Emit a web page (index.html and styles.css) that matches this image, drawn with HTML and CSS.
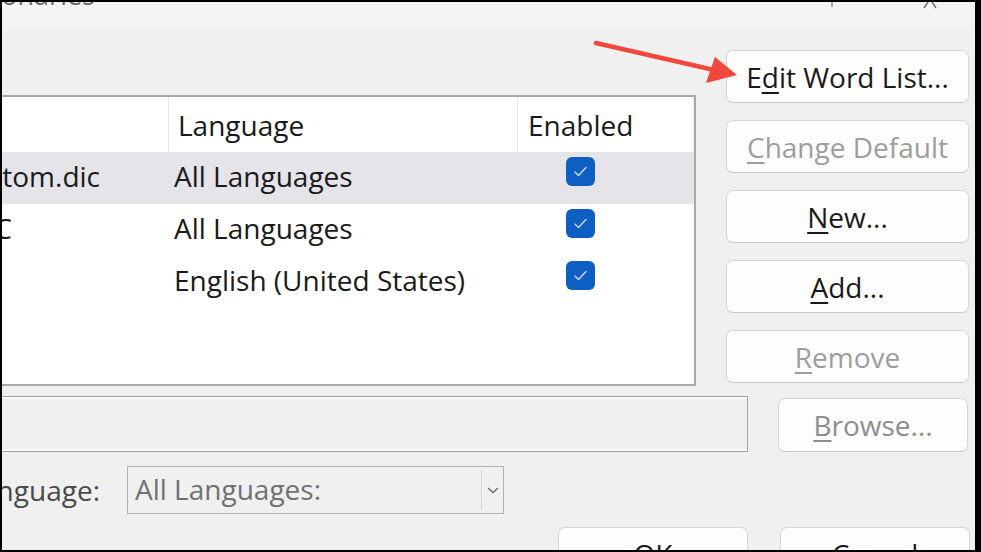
FILE: index.html
```html
<!DOCTYPE html>
<html lang="en">
<head>
<meta charset="utf-8">
<title>Custom Dictionaries</title>
<link rel="stylesheet" href="styles.css">
</head>
<body>
<div class="dialog">
  <div class="titlebar">
    <span class="title">Custom Dictionaries</span>
    <svg class="cap-max" width="4" height="6" viewBox="0 0 4 6"><line x1="1" y1="0" x2="1" y2="5" stroke="#7a7a7a" stroke-width="1.2"/></svg>
    <svg class="cap-close" width="14" height="7" viewBox="0 0 14 7"><path d="M1 6 L5 0 M13 6 L9 0" stroke="#6a6a6a" stroke-width="1.4" fill="none"/></svg>
  </div>
  <div class="content">
    <div class="top-row">
      <div class="list">
        <div class="list-head">
          <div class="cell c1"></div>
          <div class="cell c2 head">Language</div>
          <div class="cell c3 head">Enabled</div>
        </div>
        <div class="list-row selected">
          <div class="cell c1"><span class="clip r1">Custom.dic</span></div>
          <div class="cell c2">All Languages</div>
          <div class="cell c3"><span class="check"><svg width="29" height="29" viewBox="0 0 29 29"><path d="M9 15 L12.5 18.5 L20 10.5" stroke="#d6e4f6" stroke-width="1.2" fill="none" stroke-linecap="round" stroke-linejoin="round"/></svg></span></div>
        </div>
        <div class="list-row">
          <div class="cell c1"><span class="clip r2">RoamingCustom.DIC</span></div>
          <div class="cell c2">All Languages</div>
          <div class="cell c3"><span class="check"><svg width="29" height="29" viewBox="0 0 29 29"><path d="M9 15 L12.5 18.5 L20 10.5" stroke="#d6e4f6" stroke-width="1.2" fill="none" stroke-linecap="round" stroke-linejoin="round"/></svg></span></div>
        </div>
        <div class="list-row">
          <div class="cell c1"><span class="clip r3">Exclude.lex</span></div>
          <div class="cell c2">English (United States)</div>
          <div class="cell c3"><span class="check"><svg width="29" height="29" viewBox="0 0 29 29"><path d="M9 15 L12.5 18.5 L20 10.5" stroke="#d6e4f6" stroke-width="1.2" fill="none" stroke-linecap="round" stroke-linejoin="round"/></svg></span></div>
        </div>
      </div>
      <div class="btn-col">
        <button class="btn">E<u>d</u>it Word List...</button>
        <button class="btn disabled"><u>C</u>hange Default</button>
        <button class="btn"><u>N</u>ew...</button>
        <button class="btn"><u>A</u>dd...</button>
        <button class="btn disabled"><u>R</u>emove</button>
      </div>
    </div>
    <div class="file-row">
      <div class="path"></div>
      <button class="btn browse disabled-soft"><u>B</u>rowse...</button>
    </div>
    <div class="lang-row">
      <span class="lang-label">Dictionary lan<u>g</u>uage:</span>
      <div class="select">
        <span class="select-text">All Languages:</span>
        <span class="select-arrow"><svg width="14" height="10" viewBox="0 0 14 10"><path d="M2 3 L7 7.5 L12 3" stroke="#6a6a6a" stroke-width="1.4" fill="none"/></svg></span>
      </div>
    </div>
    <div class="ok-row">
      <button class="btn wide-ok">OK</button>
      <button class="btn wide-cancel">Cancel</button>
    </div>
  </div>
  <svg class="arrow" width="973" height="548" viewBox="0 0 973 548">
    <line x1="594" y1="41" x2="712" y2="68" stroke="#f0483c" stroke-width="4.5" stroke-linecap="round"/>
    <polygon points="735,73 713,55 704,81" fill="#f0483c"/>
  </svg>
</div>
</body>
</html>
```

FILE: styles.css
```css
html, body {
  margin: 0;
  padding: 0;
}
body {
  background: #000;
  width: 981px;
  height: 552px;
  overflow: hidden;
  font-family: "Open Sans", "Noto Sans", sans-serif;
  font-size: 28px;
  color: #1a1a1a;
}
.dialog {
  position: relative;
  margin: 2px 0 0 2px;
  width: 973px;
  height: 548px;
  background: #f0f0f0;
  overflow: hidden;
}
.titlebar {
  height: 28px;
  background: #f3f3f3;
  display: flex;
  align-items: flex-start;
  overflow: hidden;
}
.title {
  flex: none;
  display: block;
  width: 300px;
  margin-left: -207px;
  margin-top: -27px;
  text-align: right;
  white-space: nowrap;
  color: #6b6b6b;
  font-size: 27px;
  line-height: 40px;
}
.cap-max {
  margin-left: 736px;
  margin-top: 0;
}
.cap-close {
  margin-left: 88px;
  margin-top: 0;
}
.content {
  padding-top: 20px;
}
.top-row {
  display: flex;
  align-items: flex-start;
}
.list {
  box-sizing: border-box;
  margin-top: 45px;
  width: 694px;
  height: 291px;
  background: #fff;
  border-top: 2px solid #a9a9a9;
  border-right: 2px solid #a9a9a9;
  border-bottom: 2px solid #a9a9a9;
  overflow: hidden;
}
.list-head, .list-row {
  display: flex;
}
.list-head {
  height: 55px;
}
.list-row {
  height: 52px;
}
.list-row.selected {
  background: #e4e4e9;
}
.cell {
  box-sizing: border-box;
  display: flex;
  align-items: center;
  white-space: nowrap;
  overflow: hidden;
  padding-bottom: 5px;
}
.c1 { width: 166px; }
.c2 { width: 349px; padding-left: 6px; }
.c3 { width: 175px; padding-left: 49px; padding-bottom: 0; }
.list-head .c1 { border-right: 1px solid #e6e6e6; width: 167px; }
.list-head .c2 { border-right: 1px solid #e6e6e6; width: 349px; padding-left: 9px; }
.list-head .c3 { padding-left: 10px; border-right: 1px solid #ececec; width: 176px; }
.head { padding-bottom: 0; }
.clip {
  display: block;
  flex: none;
  text-align: right;
  width: 300px;
}
.r1 { margin-left: -202px; }
.r2 { margin-left: -290px; }
.r3 { margin-left: -340px; }
.check {
  display: block;
  width: 29px;
  height: 29px;
  border-radius: 6px;
  background: #0d5fc4;
  margin-top: -14px;
}
.check svg { display: block; }
.btn-col {
  margin-left: 30px;
  display: flex;
  flex-direction: column;
  gap: 17px;
}
.btn {
  box-sizing: border-box;
  width: 243px;
  height: 53px;
  padding: 0;
  background: #fdfdfd;
  border: 1px solid #d6d6d6;
  border-bottom-color: #c9c9c9;
  border-radius: 7px;
  font-family: inherit;
  font-size: 28px;
  color: #1a1a1a;
  white-space: nowrap;
}
.btn u {
  text-decoration-thickness: 2px;
  text-underline-offset: 4px;
}
.btn.disabled {
  color: #9d9d9d;
}
.btn.disabled-soft {
  color: #8d8d8d;
}
.file-row {
  display: flex;
  align-items: flex-end;
  margin-top: 10px;
}
.path {
  box-sizing: border-box;
  width: 746px;
  height: 56px;
  border: 1px solid #a3a3a3;
  border-left: none;
  background: #f0f0f0;
  box-shadow: inset 0 2px 0 #fbfbfb, inset 0 -2px 0 #fbfbfb;
}
.browse {
  width: 190px;
  height: 54px;
  margin-left: 30px;
}
.lang-row {
  display: flex;
  align-items: center;
  margin-top: 14px;
  height: 48px;
}
.lang-label {
  flex: none;
  display: block;
  width: 300px;
  margin-left: -202px;
  text-align: right;
  white-space: nowrap;
  color: #4a4a4a;
}
.lang-label u {
  text-decoration-thickness: 2px;
  text-underline-offset: 4px;
}
.select {
  box-sizing: border-box;
  margin-left: 27px;
  width: 377px;
  height: 48px;
  border: 1px solid #b3b3b3;
  background: #f0f0f0;
  display: flex;
  align-items: center;
}
.select-text {
  flex: 1;
  padding-left: 7px;
  padding-bottom: 2px;
  color: #717171;
  white-space: nowrap;
}
.select-arrow {
  box-sizing: border-box;
  width: 22px;
  height: 40px;
  border-left: 1px solid #d4d4d4;
  display: flex;
  align-items: center;
  justify-content: center;
}
.select-arrow svg { display: block; }
.ok-row {
  display: flex;
  justify-content: flex-end;
  gap: 32px;
  margin-top: 13px;
  padding-right: 5px;
}
.wide-ok, .wide-cancel {
  width: 190px;
}
.arrow {
  position: absolute;
  left: 0;
  top: 0;
  pointer-events: none;
}
```
